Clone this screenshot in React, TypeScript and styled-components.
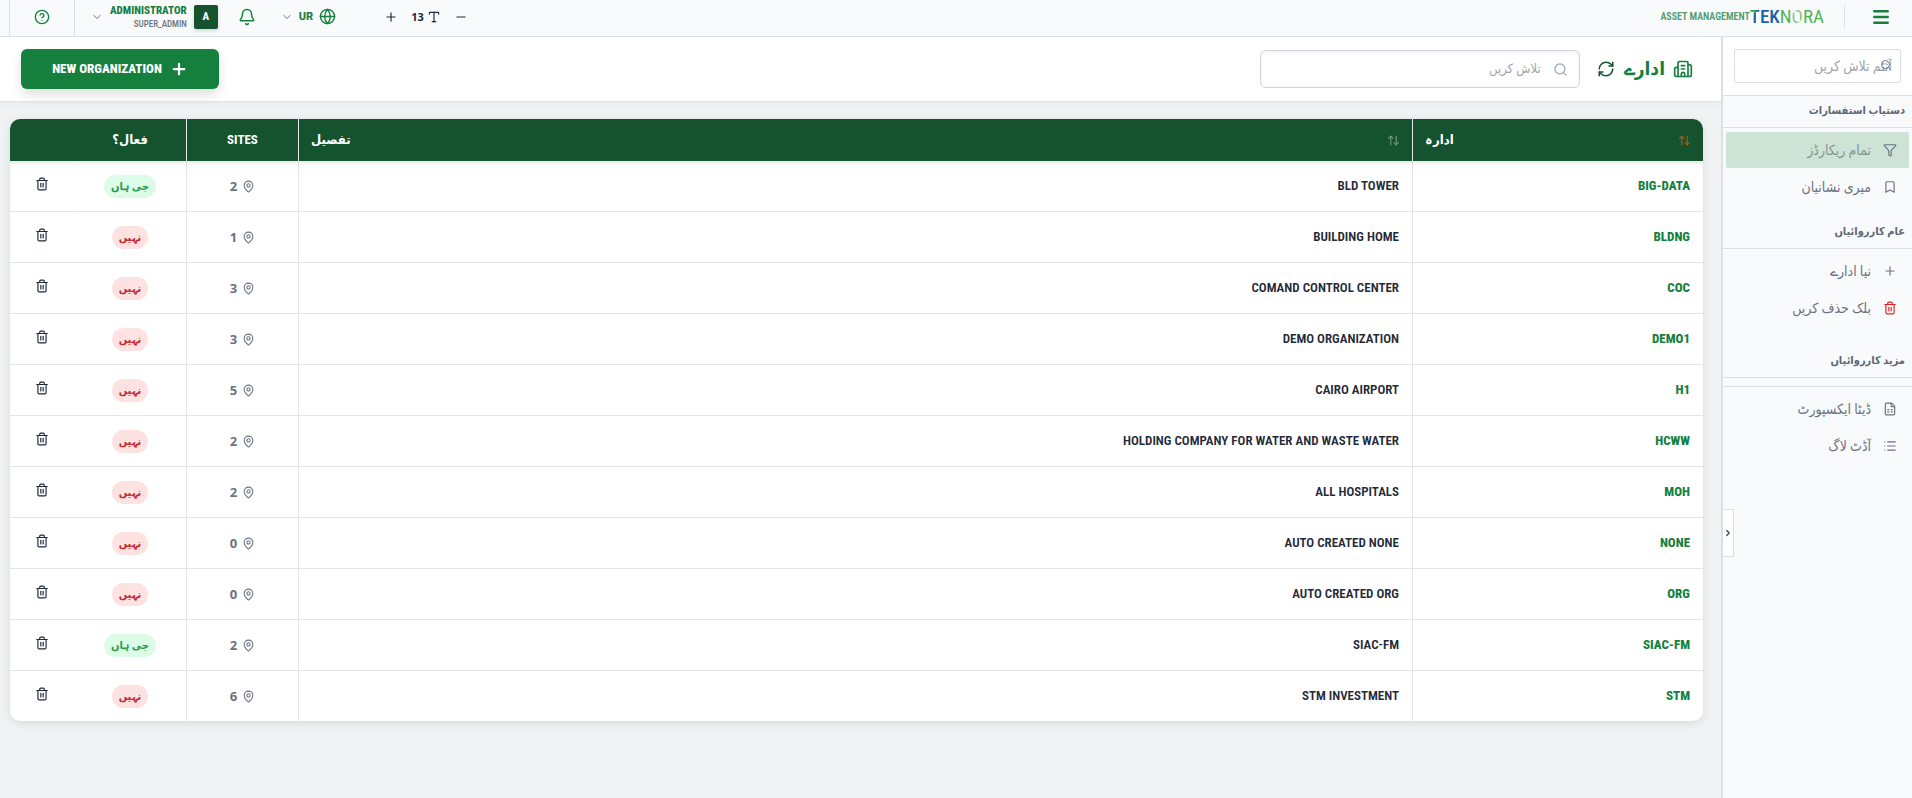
import React from 'react';
import styled, { createGlobalStyle } from 'styled-components';
import {
  ArrowUpDown,
  Bell,
  Bookmark,
  Building2,
  ChevronDown,
  ChevronRight,
  CircleHelp,
  FileSpreadsheet,
  Filter,
  Globe,
  List,
  MapPin,
  Menu,
  Minus,
  Plus,
  RefreshCw,
  Search,
  Trash2,
  Type,
} from 'lucide-react';

const c = {
  green: '#15803d',
  deep: '#14532d',
  ink: '#1f2937',
  muted: '#6b7280',
  faint: '#9ca3af',
  line: '#e2e4e7',
  edge: '#dcdfe4',
  surface: '#f8fafc',
  page: '#f1f2f4',
};

const GlobalStyle = createGlobalStyle`
  *, *::before, *::after { box-sizing: border-box; }
  body {
    margin: 0;
    background: ${c.page};
    color: ${c.ink};
    font-family: "Roboto Condensed", Roboto, "DejaVu Sans Condensed", "DejaVu Sans", sans-serif;
    font-size: 13px;
    line-height: 20px;
  }
  button, input { font: inherit; color: inherit; }
  button { background: none; border: 0; padding: 0; cursor: pointer; }
  svg { display: block; flex: none; }
`;

const Shell = styled.div`
  display: flex;
  flex-direction: column;
  min-height: 100vh;
`;

/* ---------- top bar ---------- */

const TopBar = styled.header`
  display: flex;
  align-items: stretch;
  justify-content: space-between;
  height: 37px;
  background: ${c.surface};
  border-bottom: 1px solid ${c.edge};
`;

const Brand = styled.div`
  display: flex;
  align-items: center;
  padding: 0 21px 3px 0;
`;

const IconButton = styled.button<{ $color?: string }>`
  display: flex;
  align-items: center;
  justify-content: center;
  color: ${(p) => p.$color ?? c.green};
`;

const BrandDivider = styled.span`
  width: 1px;
  height: 24px;
  margin: 0 26px 0 20px;
  background: ${c.edge};
`;

const Logo = styled.span`
  display: flex;
  align-items: center;
  direction: ltr;
  font-size: 19px;
  line-height: 24px;
  color: #4fb35a;
`;

const LogoBlue = styled.span`
  font-weight: 500;
  color: #1d62a5;
`;

const LogoLead = styled(LogoBlue)`
  background: linear-gradient(115deg, #35a853 38%, #1d62a5 42%);
  background-clip: text;
  color: transparent;
`;

const LogoRing = styled.span`
  background: linear-gradient(65deg, #7cc884 40%, #d9efdc 44%, #d9efdc 54%, #7cc884 60%);
  background-clip: text;
  color: transparent;
`;

const Product = styled.span`
  font-size: 10px;
  line-height: 16px;
  font-weight: 600;
  color: #4f9a6c;
`;

const Tools = styled.div`
  display: flex;
  align-items: stretch;
`;

const FontSizer = styled.div`
  display: flex;
  align-items: center;
  gap: 13px;
  padding: 0 0 3px 48px;
  color: ${c.ink};
`;

const SizeValue = styled.span`
  display: flex;
  align-items: center;
  gap: 3px;
  font-family: "Open Sans", sans-serif;
  font-size: 11px;
  font-weight: 700;
`;

const Language = styled.button`
  display: flex;
  align-items: center;
  gap: 6px;
  padding: 0 0 3px 25px;
  font-family: Roboto, sans-serif;
  font-size: 11px;
  font-weight: 800;
  color: ${c.green};
`;

const Caret = styled(ChevronDown).attrs({ size: 12, strokeWidth: 2 })`
  color: ${c.muted};
`;

const BellButton = styled(IconButton)`
  padding: 0 0 3px 20px;
`;

const Account = styled.button`
  display: flex;
  align-items: center;
  gap: 7px;
  padding: 0 0 3px 16px;
  border-left: 1px solid ${c.edge};
`;

const Avatar = styled.span`
  display: grid;
  place-items: center;
  width: 24px;
  height: 24px;
  border-radius: 2px;
  background: ${c.deep};
  box-shadow: 0 2px 4px rgba(0, 0, 0, 0.15);
  color: #fff;
  font-size: 11px;
  font-weight: 800;
`;

const AccountText = styled.span`
  display: flex;
  flex-direction: column;
  align-items: flex-end;
  direction: ltr;
`;

const AccountName = styled.span`
  font-size: 11px;
  line-height: 14px;
  font-weight: 800;
  color: ${c.green};
`;

const AccountRole = styled.span`
  font-size: 9px;
  line-height: 12px;
  font-weight: 500;
  color: ${c.muted};
`;

const HelpSlot = styled.div`
  display: flex;
  align-items: center;
  justify-content: center;
  width: 65px;
  margin-left: 9px;
  padding-bottom: 3px;
  border-left: 1px solid ${c.edge};
`;

/* ---------- side panel ---------- */

const Body = styled.div`
  display: flex;
  flex: 1;
`;

const Side = styled.aside`
  position: relative;
  flex: none;
  width: 191px;
  background: ${c.surface};
  border-left: 2px solid ${c.edge};
`;

const SideSearch = styled.label`
  position: relative;
  display: block;
  padding: 12px 11px 12px 11px;
  background: #fff;
  border-bottom: 1px solid ${c.edge};
`;

const SideInput = styled.input`
  display: block;
  width: 100%;
  height: 34px;
  padding: 0 8px;
  border: 1px solid ${c.edge};
  border-radius: 2px;
  background: #fff;
  font-size: 14px;
  &::placeholder { color: ${c.faint}; opacity: 1; }
`;

const SideSearchIcon = styled(Search).attrs({ size: 12, strokeWidth: 2 })`
  position: absolute;
  top: 22px;
  right: 20px;
  color: ${c.muted};
`;

const SectionTitle = styled.h2<{ $gap?: number }>`
  margin: ${(p) => p.$gap ?? 0}px 0 0;
  padding: 5px 7px 6px;
  border-bottom: 1px solid ${c.edge};
  font-size: 11px;
  line-height: 20px;
  font-weight: 700;
  color: #5f6773;
`;

const Menuing = styled.nav<{ $ruled?: boolean }>`
  display: flex;
  flex-direction: column;
  gap: 1px;
  margin-top: ${(p) => (p.$ruled ? 8 : 0)}px;
  padding: 4px 3px 0;
  border-top: ${(p) => (p.$ruled ? `1px solid ${c.edge}` : '0')};
`;

const MenuLink = styled.a<{ $active?: boolean }>`
  display: flex;
  align-items: center;
  gap: 12px;
  height: 36px;
  padding: 0 12px;
  border-radius: 2px;
  background: ${(p) => (p.$active ? '#cce3d6' : 'transparent')};
  color: ${(p) => (p.$active ? '#87938f' : c.muted)};
  font-size: 14px;
  text-decoration: none;
`;

const MenuIcon = styled.span<{ $danger?: boolean }>`
  display: grid;
  place-items: center;
  width: 14px;
  color: ${(p) => (p.$danger ? '#dc2626' : c.muted)};
`;

const Collapse = styled.button`
  position: absolute;
  top: 62%;
  left: 0;
  display: grid;
  place-items: center;
  width: 11px;
  height: 48px;
  background: #fff;
  border: 1px solid ${c.edge};
  border-left: 0;
  color: #374151;
`;

/* ---------- main area ---------- */

const Main = styled.main`
  flex: 1;
  min-width: 0;
`;

const PageHead = styled.div`
  display: flex;
  align-items: center;
  height: 65px;
  padding: 0 28px 0 21px;
  background: #fff;
  border-bottom: 1px solid ${c.line};
  box-shadow: 0 2px 6px rgba(0, 0, 0, 0.04);
`;

const Title = styled.h1`
  display: flex;
  align-items: center;
  gap: 8px;
  margin: 0 0 0 9px;
  font-size: 19px;
  line-height: 28px;
  font-weight: 700;
  color: ${c.green};
`;

const SearchBox = styled.label`
  display: flex;
  align-items: center;
  gap: 12px;
  width: 320px;
  height: 38px;
  margin: 0 17px 0 auto;
  padding: 0 11px;
  border: 1px solid #cfd3d8;
  border-radius: 6px;
  background: #fff;
  box-shadow: inset 0 2px 4px rgba(0, 0, 0, 0.05);
  color: ${c.faint};
`;

const SearchInput = styled.input`
  flex: 1;
  min-width: 0;
  padding: 0;
  border: 0;
  outline: 0;
  background: transparent;
  &::placeholder { color: ${c.faint}; opacity: 1; }
`;

const NewButton = styled.button`
  display: flex;
  align-items: center;
  justify-content: center;
  gap: 8px;
  width: 198px;
  height: 40px;
  border-radius: 6px;
  background: ${c.green};
  box-shadow: 0 6px 12px rgba(0, 0, 0, 0.12);
  color: #fff;
  font-size: 13px;
  font-weight: 800;
`;

const TableCard = styled.div`
  margin: 17px 18px 24px 10px;
  border-radius: 10px;
  overflow: hidden;
  background: #fff;
  box-shadow: 0 2px 10px rgba(0, 0, 0, 0.1);
`;

const Table = styled.table`
  width: 100%;
  border-collapse: separate;
  border-spacing: 0;
  table-layout: fixed;
`;

const Col = styled.col<{ $w?: number }>`
  width: ${(p) => (p.$w ? `${p.$w}px` : 'auto')};
`;

const Th = styled.th<{ $ruled?: boolean }>`
  height: 42px;
  padding: 0 12px;
  border-left: ${(p) => (p.$ruled ? '1px solid #e5e7eb' : '0')};
  background: ${c.deep};
  color: #fff;
  font-size: 13px;
  font-weight: 700;
`;

const SortButton = styled.button<{ $on?: boolean }>`
  display: flex;
  align-items: center;
  justify-content: space-between;
  width: 100%;
  font-weight: 700;
  svg { color: ${(p) => (p.$on ? '#c2560c' : '#6f9a80')}; }
`;

const Td = styled.td<{ $ruled?: boolean; $center?: boolean }>`
  height: 51px;
  padding: 0 13px;
  border-bottom: 1px solid ${c.line};
  border-left: ${(p) => (p.$ruled ? `1px solid ${c.line}` : '0')};
  text-align: ${(p) => (p.$center ? 'center' : 'right')};
`;

const Row = styled.tr`
  &:first-child td { box-shadow: inset 0 5px 5px -4px rgba(0, 0, 0, 0.14); }
  &:last-child td { height: 50px; border-bottom: 0; }
`;

const Code = styled.span`
  font-weight: 800;
  color: ${c.green};
`;

const Detail = styled.span`
  font-weight: 600;
  color: ${c.ink};
`;

const Sites = styled.span`
  display: flex;
  align-items: center;
  justify-content: center;
  gap: 5px;
  color: ${c.muted};
  font-family: "Open Sans", sans-serif;
  font-weight: 700;
`;

const Pill = styled.span<{ $yes: boolean }>`
  display: inline-block;
  height: 23px;
  padding: 0 7px;
  border-radius: 12px;
  background: ${(p) => (p.$yes ? '#dcfce7' : '#fee2e2')};
  color: ${(p) => (p.$yes ? '#2a9a50' : '#c42b2f')};
  font-size: 11px;
  line-height: 23px;
  font-weight: 700;
`;

const DeleteButton = styled(IconButton)`
  margin: 0 auto;
  padding-bottom: 5px;
`;

const orgs = [
  { code: 'BIG-DATA', detail: 'BLD TOWER', sites: 2, active: true },
  { code: 'BLDNG', detail: 'BUILDING HOME', sites: 1, active: false },
  { code: 'COC', detail: 'COMAND CONTROL CENTER', sites: 3, active: false },
  { code: 'DEMO1', detail: 'DEMO ORGANIZATION', sites: 3, active: false },
  { code: 'H1', detail: 'CAIRO AIRPORT', sites: 5, active: false },
  { code: 'HCWW', detail: 'HOLDING COMPANY FOR WATER AND WASTE WATER', sites: 2, active: false },
  { code: 'MOH', detail: 'ALL HOSPITALS', sites: 2, active: false },
  { code: 'NONE', detail: 'AUTO CREATED NONE', sites: 0, active: false },
  { code: 'ORG', detail: 'AUTO CREATED ORG', sites: 0, active: false },
  { code: 'SIAC-FM', detail: 'SIAC-FM', sites: 2, active: true },
  { code: 'STM', detail: 'STM INVESTMENT', sites: 6, active: false },
];

export default function App() {
  return (
    <Shell dir="rtl" lang="ur">
      <GlobalStyle />
      <TopBar>
        <Brand>
          <IconButton aria-label="Menu">
            <Menu size={20} strokeWidth={3} />
          </IconButton>
          <BrandDivider />
          <Logo>
            <LogoLead>T</LogoLead>
            <LogoBlue>EK</LogoBlue>
            <span>N</span>
            <LogoRing>O</LogoRing>
            <span>RA</span>
          </Logo>
          <Product>ASSET MANAGEMENT</Product>
        </Brand>
        <Tools>
          <FontSizer>
            <IconButton $color={c.ink} aria-label="Smaller text">
              <Minus size={14} strokeWidth={2} />
            </IconButton>
            <SizeValue>
              <Type size={14} strokeWidth={2} />
              13
            </SizeValue>
            <IconButton $color={c.ink} aria-label="Larger text">
              <Plus size={14} strokeWidth={2} />
            </IconButton>
          </FontSizer>
          <Language>
            <Globe size={17} strokeWidth={2} />
            UR
            <Caret />
          </Language>
          <BellButton aria-label="Notifications">
            <Bell size={18} strokeWidth={2} />
          </BellButton>
          <Account>
            <Avatar>A</Avatar>
            <AccountText>
              <AccountName>ADMINISTRATOR</AccountName>
              <AccountRole>SUPER_ADMIN</AccountRole>
            </AccountText>
            <Caret />
          </Account>
          <HelpSlot>
            <IconButton aria-label="Help">
              <CircleHelp size={16} strokeWidth={2} />
            </IconButton>
          </HelpSlot>
        </Tools>
      </TopBar>

      <Body>
        <Side>
          <SideSearch>
            <SideInput placeholder="آئٹم تلاش کریں" aria-label="آئٹم تلاش کریں" />
            <SideSearchIcon />
          </SideSearch>

          <SectionTitle>دستیاب استفسارات</SectionTitle>
          <Menuing>
            <MenuLink href="#all" $active>
              <MenuIcon><Filter size={14} strokeWidth={2} /></MenuIcon>
              تمام ریکارڈز
            </MenuLink>
            <MenuLink href="#bookmarks">
              <MenuIcon><Bookmark size={14} strokeWidth={2} /></MenuIcon>
              میری نشانیان
            </MenuLink>
          </Menuing>

          <SectionTitle $gap={12}>عام کارروائیاں</SectionTitle>
          <Menuing>
            <MenuLink href="#new">
              <MenuIcon><Plus size={14} strokeWidth={2} /></MenuIcon>
              نیا ادارے
            </MenuLink>
            <MenuLink href="#bulk-delete">
              <MenuIcon $danger><Trash2 size={14} strokeWidth={2} /></MenuIcon>
              بلک حذف کریں
            </MenuLink>
          </Menuing>

          <SectionTitle $gap={20}>مزید کارروائیاں</SectionTitle>
          <Menuing $ruled>
            <MenuLink href="#export">
              <MenuIcon><FileSpreadsheet size={14} strokeWidth={2} /></MenuIcon>
              ڈیٹا ایکسپورٹ
            </MenuLink>
            <MenuLink href="#audit">
              <MenuIcon><List size={14} strokeWidth={2} /></MenuIcon>
              آڈٹ لاگ
            </MenuLink>
          </Menuing>

          <Collapse aria-label="Collapse">
            <ChevronRight size={10} strokeWidth={3} />
          </Collapse>
        </Side>

        <Main>
          <PageHead>
            <Title>
              <Building2 size={20} strokeWidth={2} />
              ادارے
            </Title>
            <IconButton $color={c.deep} aria-label="Refresh">
              <RefreshCw size={18} strokeWidth={2} />
            </IconButton>
            <SearchBox>
              <Search size={15} strokeWidth={2} />
              <SearchInput placeholder="تلاش کریں" aria-label="تلاش کریں" />
            </SearchBox>
            <NewButton>
              <Plus size={18} strokeWidth={3} />
              NEW ORGANIZATION
            </NewButton>
          </PageHead>

          <TableCard>
            <Table>
              <colgroup>
                <Col $w={291} />
                <Col />
                <Col $w={112} />
                <Col $w={112} />
                <Col $w={64} />
              </colgroup>
              <thead>
                <tr>
                  <Th $ruled>
                    <SortButton $on>
                      <ArrowUpDown size={13} strokeWidth={2} />
                      ادارہ
                    </SortButton>
                  </Th>
                  <Th $ruled>
                    <SortButton>
                      <ArrowUpDown size={13} strokeWidth={2} />
                      تفصیل
                    </SortButton>
                  </Th>
                  <Th $ruled>SITES</Th>
                  <Th>فعال؟</Th>
                  <Th aria-label="Delete" />
                </tr>
              </thead>
              <tbody>
                {orgs.map((o) => (
                  <Row key={o.code}>
                    <Td $ruled><Code>{o.code}</Code></Td>
                    <Td $ruled><Detail>{o.detail}</Detail></Td>
                    <Td $ruled>
                      <Sites>
                        <MapPin size={13} strokeWidth={2} />
                        {o.sites}
                      </Sites>
                    </Td>
                    <Td $center><Pill $yes={o.active}>{o.active ? 'جی ہاں' : 'نہیں'}</Pill></Td>
                    <Td>
                      <DeleteButton $color={c.ink} aria-label={`Delete ${o.code}`}>
                        <Trash2 size={14} strokeWidth={2} />
                      </DeleteButton>
                    </Td>
                  </Row>
                ))}
              </tbody>
            </Table>
          </TableCard>
        </Main>
      </Body>
    </Shell>
  );
}
